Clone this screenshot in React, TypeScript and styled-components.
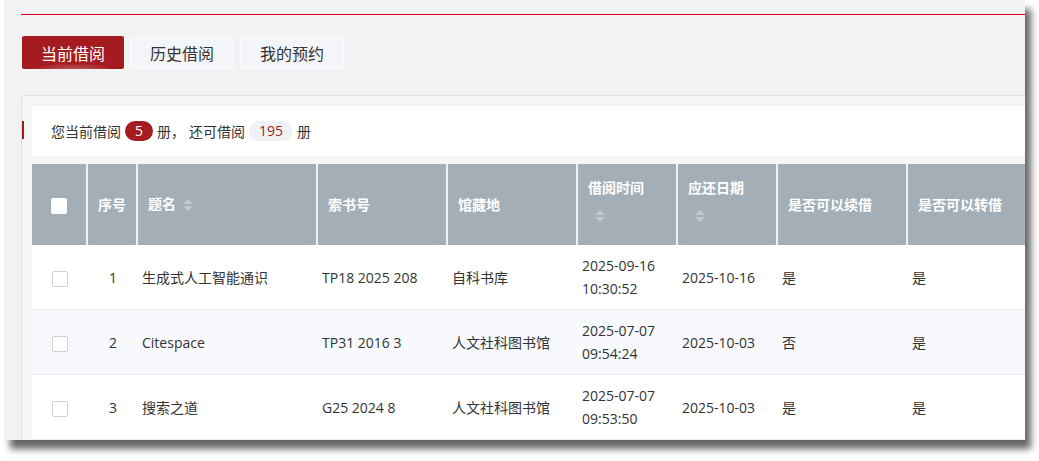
import * as React from "react"
import styled, { createGlobalStyle } from "styled-components"

const GlobalStyle = createGlobalStyle`
  html, body {
    margin: 0;
    padding: 0;
    background: #ffffff;
  }
  body {
    font-family: "Open Sans", "Noto Sans CJK SC", sans-serif;
    color: #333333;
  }
  * {
    box-sizing: border-box;
  }
`

const THEME_RED = "#a51c20"

const Page = styled.div`
  width: 1039px;
  height: 461px;
  padding-left: 4px;
  background: #ffffff;
`

const Shot = styled.div`
  width: 1021px;
  height: 440px;
  overflow: hidden;
  background: #f1f2f4;
  box-shadow: 6px 9px 7px rgba(0, 0, 0, 0.6);
  padding-left: 17px;
`

const TopRule = styled.div`
  height: 15px;
  border-bottom: 1px solid #d9001b;
`

const Tabs = styled.div`
  display: flex;
  gap: 6px;
  margin: 21px 0 0 1px;
`

const Tab = styled.div<{ $active?: boolean }>`
  height: 33px;
  display: flex;
  align-items: center;
  justify-content: center;
  padding: 0 19px;
  font-size: 16px;
  border-radius: 2px;
  font-family: "Noto Sans CJK SC", sans-serif;
  color: ${(p) => (p.$active ? "#ffffff" : "#333333")};
  border: ${(p) => (p.$active ? "none" : "1px solid #fbfbfc")};
  background: ${(p) =>
    p.$active
      ? `radial-gradient(ellipse 42% 26% at 50% 108%, rgba(255,255,255,0.32), rgba(255,255,255,0.08) 80%, rgba(255,255,255,0) 100%), ${THEME_RED}`
      : "#f4f5f8"};
`

const Card = styled.div`
  margin-top: 26px;
  width: 1200px;
  border: 1px solid #dcdfe4;
  border-radius: 4px 0 0 0;
  background: #f4f5f7;
  padding: 10px 0 0 10px;
`

const Summary = styled.div`
  position: relative;
  height: 50px;
  background: #ffffff;
  display: flex;
  align-items: center;
  padding-left: 19px;
  font-size: 14px;
  color: #333333;

  &::before {
    content: "";
    position: absolute;
    left: -10px;
    top: 15px;
    width: 2px;
    height: 18px;
    background: ${THEME_RED};
  }
`

const Pill = styled.span<{ $tone: "red" | "grey" }>`
  display: inline-block;
  height: 20px;
  line-height: 20px;
  padding: 0 10px;
  margin: 0 4px;
  border-radius: 10px;
  background: ${(p) => (p.$tone === "red" ? THEME_RED : "#f1f2f5")};
  color: ${(p) => (p.$tone === "red" ? "#ffffff" : THEME_RED)};
`

const Rest = styled.span`
  margin-left: 4px;
`

const Table = styled.table`
  margin-top: 8px;
  width: 1190px;
  table-layout: fixed;
  border-collapse: separate;
  border-spacing: 0;
  font-size: 14px;
`

const Th = styled.th<{ $center?: boolean }>`
  height: 81px;
  padding: 12px 10px;
  background: #a3aeb6;
  color: #ffffff;
  font-weight: 700;
  line-height: 23px;
  text-align: ${(p) => (p.$center ? "center" : "left")};
  vertical-align: middle;
  border-right: 2px solid #eef1f4;
  font-family: "Noto Sans CJK SC", sans-serif;
`

const Tr = styled.tr<{ $striped?: boolean }>`
  background: ${(p) => (p.$striped ? "#f8f9fd" : "#ffffff")};
`

const Td = styled.td<{ $center?: boolean }>`
  height: 65px;
  padding: 9px 4px;
  line-height: 23px;
  color: #333333;
  text-align: ${(p) => (p.$center ? "center" : "left")};
  vertical-align: middle;
  border-bottom: 1px solid #ebeef5;
`

const Check = styled.span<{ $head?: boolean }>`
  display: inline-block;
  width: 16px;
  height: 16px;
  vertical-align: middle;
  border-radius: 2px;
  background: #ffffff;
  border: 1px solid ${(p) => (p.$head ? "#ffffff" : "#cfd3d9")};
`

const CaretWrap = styled.span`
  display: inline-flex;
  align-items: center;
  width: 24px;
  height: 34px;
  vertical-align: middle;
  padding-left: 7px;
`

const SortCaret = () => (
  <CaretWrap>
    <svg width="10" height="12" viewBox="0 0 10 12">
      <path d="M0 5 L5 0 L10 5 Z" fill="#c3c8ce" />
      <path d="M0 7 L10 7 L5 12 Z" fill="#c3c8ce" />
    </svg>
  </CaretWrap>
)

interface ILoan {
  no: number
  title: string
  callNo: string
  place: string
  borrowed: string
  due: string
  renew: string
  transfer: string
}

const loans: ILoan[] = [
  {
    no: 1,
    title: "生成式人工智能通识",
    callNo: "TP18 2025 208",
    place: "自科书库",
    borrowed: "2025-09-16 10:30:52",
    due: "2025-10-16",
    renew: "是",
    transfer: "是",
  },
  {
    no: 2,
    title: "Citespace",
    callNo: "TP31 2016 3",
    place: "人文社科图书馆",
    borrowed: "2025-07-07 09:54:24",
    due: "2025-10-03",
    renew: "否",
    transfer: "是",
  },
  {
    no: 3,
    title: "搜索之道",
    callNo: "G25 2024 8",
    place: "人文社科图书馆",
    borrowed: "2025-07-07 09:53:50",
    due: "2025-10-03",
    renew: "是",
    transfer: "是",
  },
]

const colWidths = [56, 50, 180, 130, 130, 100, 100, 130]

const App: React.FC = () => {
  return (
    <Page>
      <GlobalStyle />
      <Shot>
        <TopRule />
        <Tabs>
          <Tab $active>当前借阅</Tab>
          <Tab>历史借阅</Tab>
          <Tab>我的预约</Tab>
        </Tabs>
        <Card>
          <Summary>
            您当前借阅<Pill $tone="red">5</Pill>册，<Rest>还可借阅</Rest>
            <Pill $tone="grey">195</Pill>册
          </Summary>
          <Table>
            <colgroup>
              {colWidths.map((w, i) => (
                <col key={i} style={{ width: w }} />
              ))}
              <col />
            </colgroup>
            <thead>
              <tr>
                <Th $center>
                  <Check $head />
                </Th>
                <Th $center>序号</Th>
                <Th>
                  题名
                  <SortCaret />
                </Th>
                <Th>索书号</Th>
                <Th>馆藏地</Th>
                <Th>
                  借阅时间
                  <SortCaret />
                </Th>
                <Th>
                  应还日期
                  <SortCaret />
                </Th>
                <Th>是否可以续借</Th>
                <Th>是否可以转借</Th>
              </tr>
            </thead>
            <tbody>
              {loans.map((l, i) => (
                <Tr key={l.no} $striped={i % 2 === 1}>
                  <Td $center>
                    <Check />
                  </Td>
                  <Td $center>{l.no}</Td>
                  <Td>{l.title}</Td>
                  <Td>{l.callNo}</Td>
                  <Td>{l.place}</Td>
                  <Td>{l.borrowed}</Td>
                  <Td>{l.due}</Td>
                  <Td>{l.renew}</Td>
                  <Td>{l.transfer}</Td>
                </Tr>
              ))}
            </tbody>
          </Table>
        </Card>
      </Shot>
    </Page>
  )
}

export default App
